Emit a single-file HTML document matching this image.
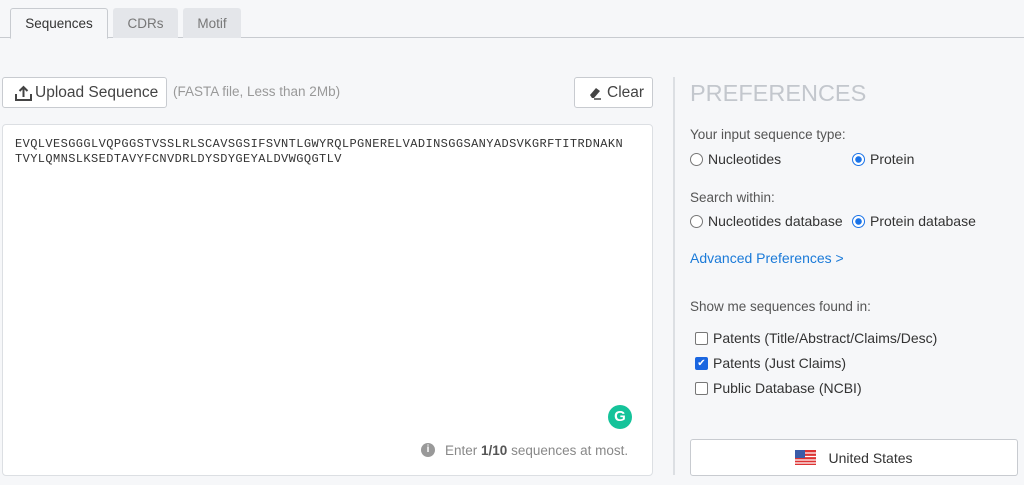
<!DOCTYPE html>
<html><head><style>
*{box-sizing:border-box;margin:0;padding:0}
body{width:1024px;height:485px;background:#f6f7f9;font-family:"Liberation Sans",sans-serif;position:relative;overflow:hidden;color:#333}
.a{position:absolute}
.tab{position:absolute;top:8px;height:30px;font-size:13.5px;display:flex;align-items:center;justify-content:center;border-radius:3px 3px 0 0}
.btn{position:absolute;background:#fff;border:1px solid #c8cbd0;border-radius:3px;display:flex;align-items:center}
.lbl{position:absolute;left:690px;font-size:13.5px;color:#555}
.opt{position:absolute;font-size:14px;color:#333;display:flex;align-items:center}
.rad{width:13px;height:13px;border:1px solid #777;border-radius:50%;margin-right:5px;background:#fff}
.rad.on{border:1.5px solid #1a73e8;background:radial-gradient(#1a73e8 0 3px,#fff 3.5px)}
.cb{width:13px;height:13px;border:1px solid #777;border-radius:2px;margin-right:5px;background:#fff}
</style></head><body>
<div class="a" style="left:0;top:37px;width:1024px;height:1px;background:#c8cbd0"></div>
<div class="tab" style="left:10px;width:98px;background:#f6f7f9;border:1px solid #c8cbd0;border-bottom:1px solid #f6f7f9;color:#333;height:31px">Sequences</div>
<div class="tab" style="left:113px;width:65px;background:#e4e6ea;color:#777">CDRs</div>
<div class="tab" style="left:183px;width:58px;background:#e4e6ea;color:#777">Motif</div>

<div class="btn" style="left:2px;top:77px;width:165px;height:31px;font-size:15.5px;color:#444;padding-left:11px">
<svg width="20" height="18" viewBox="0 0 20 18" style="margin-right:1px"><path d="M2 10v6h15v-6" fill="none" stroke="#444" stroke-width="2"/><path d="M9.5 13V3M5.5 7l4-4 4 4" fill="none" stroke="#444" stroke-width="2"/></svg>Upload Sequence</div>
<div class="a" style="left:173px;top:84px;font-size:13.5px;color:#999">(FASTA file, Less than 2Mb)</div>
<div class="btn" style="left:574px;top:77px;width:79px;height:31px;font-size:15.5px;color:#444;padding-left:12px">
<svg width="16" height="16" viewBox="0 0 16 16" style="margin-right:4px"><path d="M3 10l6-7 4 3-6 7H5z" fill="#444"/><path d="M7 14h7" stroke="#444" stroke-width="1.5"/></svg>Clear</div>

<div class="a" style="left:2px;top:124px;width:651px;height:352px;background:#fff;border:1px solid #dcdfe3;border-radius:4px"></div>
<div class="a" style="left:15px;top:137px;font-family:'Liberation Mono',monospace;font-size:12px;letter-spacing:0.4px;line-height:15px;color:#333;white-space:pre">EVQLVESGGGLVQPGGSTVSSLRLSCAVSGSIFSVNTLGWYRQLPGNERELVADINSGGSANYADSVKGRFTITRDNAKN
TVYLQMNSLKSEDTAVYFCNVDRLDYSDYGEYALDVWGQGTLV</div>
<div class="a" style="left:608px;top:405px;width:24px;height:24px;border-radius:50%;background:#15c39a;color:#fff;font-weight:bold;font-size:15px;text-align:center;line-height:24px">G</div>
<div class="a" style="left:421px;top:443px;width:14px;height:14px;border-radius:50%;background:#999;color:#fff;font-size:10px;font-weight:bold;text-align:center;line-height:14px">i</div>
<div class="a" style="left:445px;top:443px;font-size:13.5px;color:#888">Enter <b style="color:#555">1/10</b> sequences at most.</div>

<div class="a" style="left:673px;top:77px;width:2px;height:398px;background:#dcdfe3"></div>
<div class="a" style="left:690px;top:80px;font-size:23.5px;color:#c3c7cd">PREFERENCES</div>
<div class="lbl" style="top:127px">Your input sequence type:</div>
<div class="opt" style="left:690px;top:151px"><span class="rad"></span>Nucleotides</div>
<div class="opt" style="left:852px;top:151px"><span class="rad on"></span>Protein</div>
<div class="lbl" style="top:190px">Search within:</div>
<div class="opt" style="left:690px;top:213px"><span class="rad"></span>Nucleotides database</div>
<div class="opt" style="left:852px;top:213px"><span class="rad on"></span>Protein database</div>
<div class="a" style="left:690px;top:250px;font-size:14px;color:#1a7ad8">Advanced Preferences &gt;</div>
<div class="lbl" style="top:299px">Show me sequences found in:</div>
<div class="opt" style="left:695px;top:330px"><span class="cb"></span>Patents (Title/Abstract/Claims/Desc)</div>
<div class="opt" style="left:695px;top:355px"><span class="cb" style="background:#1a66e0;border-color:#1a66e0;color:#fff;font-size:10px;line-height:12px;text-align:center">✔</span>Patents (Just Claims)</div>
<div class="opt" style="left:695px;top:380px"><span class="cb"></span>Public Database (NCBI)</div>

<div class="btn" style="left:690px;top:439px;width:328px;height:37px;justify-content:center;font-size:14px;color:#333">
<svg width="21" height="15" viewBox="0 0 21 15" style="margin-right:12px"><rect width="21" height="15" fill="#d33"/><path d="M0 3h21M0 6.5h21M0 10h21M0 13h21" stroke="#fff" stroke-width="1.3"/><rect width="10" height="8" fill="#3b5ba8"/></svg>United States</div>
</body></html>
